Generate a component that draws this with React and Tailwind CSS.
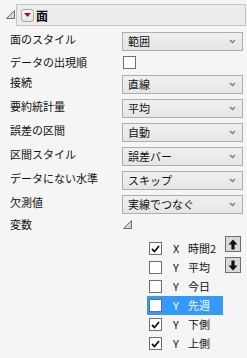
import React from "react";

const FONT = "font-['Noto_Sans_CJK_JP','Noto_Sans',sans-serif]";

function Chevron() {
  return (
    <svg width="7" height="5" viewBox="0 0 7 5" className="shrink-0">
      <path d="M1 1 L3.5 3.5 L6 1" fill="none" stroke="#7a7a7a" strokeWidth="1.3" />
    </svg>
  );
}

function Dropdown({ value }) {
  return (
    <div className="flex h-[19px] w-[121px] items-center justify-between border border-[#adadad] bg-gradient-to-b from-[#f0f0f0] to-[#e5e5e5] pl-[5px] pr-[6px]">
      <span className="text-[11px] leading-[15px] text-[#111]">{value}</span>
      <Chevron />
    </div>
  );
}

function Check({ checked }) {
  return (
    <div className="flex h-[13px] w-[13px] shrink-0 items-center justify-center border border-[#6e6e6e] bg-white">
      {checked && (
        <svg width="9" height="8" viewBox="0 0 9 8">
          <path d="M1 4 L3.5 6.5 L8 1" fill="none" stroke="#111" strokeWidth="1.8" />
        </svg>
      )}
    </div>
  );
}

function Corner() {
  return (
    <svg width="9" height="9" viewBox="0 0 9 9" className="shrink-0">
      <path d="M0.5 8.5 L8.5 0.5 L8.5 8.5 Z" fill="#d6d6d6" stroke="#6f6f6f" strokeWidth="1" />
    </svg>
  );
}

const ROWS = [
  { label: "接続", value: "直線" },
  { label: "要約統計量", value: "平均" },
  { label: "誤差の区間", value: "自動" },
  { label: "区間スタイル", value: "誤差バー" },
  { label: "データにない水準", value: "スキップ" },
  { label: "欠測値", value: "実線でつなぐ" },
];

const VARS = [
  { role: "X", name: "時間2", checked: true },
  { role: "Y", name: "平均", checked: false },
  { role: "Y", name: "今日", checked: false },
  { role: "Y", name: "先週", checked: false, selected: true },
  { role: "Y", name: "下側", checked: true },
  { role: "Y", name: "上側", checked: true },
];

function Row({ label, children }) {
  return (
    <div className="flex h-[24px] items-start">
      <span className="w-[112px] text-[11px] leading-[15px] text-[#111]">{label}</span>
      {children}
    </div>
  );
}

function MoveButton({ up }) {
  return (
    <div className="flex h-[16px] w-[16px] items-center justify-center border border-[#6e6e6e] bg-[#dadada]">
      <svg width="10" height="11" viewBox="0 0 10 11">
        {up ? (
          <path d="M5 0.5 L9.5 5.5 L6.6 5.5 L6.6 10.5 L3.4 10.5 L3.4 5.5 L0.5 5.5 Z" fill="#111" />
        ) : (
          <path d="M5 10.5 L9.5 5.5 L6.6 5.5 L6.6 0.5 L3.4 0.5 L3.4 5.5 L0.5 5.5 Z" fill="#111" />
        )}
      </svg>
    </div>
  );
}

export default function App() {
  return (
    <div className={`h-[358px] w-[247px] overflow-hidden bg-[#f5f5f5] ${FONT}`}>
      {/* header */}
      <div className="flex items-start pl-[6px] pt-[4px]">
        <div className="mt-[6px]">
          <Corner />
        </div>
        <div className="ml-[1px] flex h-[22px] w-[230px] items-center border border-[#c4c4c4] bg-[#ececec] pl-[4px]">
          <div className="flex h-[13px] w-[13px] items-center justify-center rounded-[3px] border border-[#a8a8a8] bg-gradient-to-b from-[#fbfbfb] to-[#e6e6e6]">
            <svg width="7" height="4" viewBox="0 0 7 4">
              <path d="M0 0 L7 0 L3.5 4 Z" fill="#d0021b" />
            </svg>
          </div>
          <span className="ml-[2px] text-[12px] font-bold leading-[15px] text-black">面</span>
        </div>
      </div>

      {/* options */}
      <div className="mt-[6px] flex flex-col pl-[10px]">
        <Row label="面のスタイル">
          <Dropdown value="範囲" />
        </Row>
        <div className="flex h-[19px] items-start">
          <span className="w-[113px] text-[11px] leading-[12px] text-[#111]">データの出現順</span>
          <Check checked={false} />
        </div>
        {ROWS.map((r) => (
          <Row key={r.label} label={r.label}>
            <Dropdown value={r.value} />
          </Row>
        ))}
        <div className="-mt-[1px] flex h-[18px] items-start">
          <span className="w-[113px] text-[11px] leading-[12px] text-[#111]">変数</span>
          <div className="mt-[2px]">
            <Corner />
          </div>
        </div>
      </div>

      {/* variable list */}
      <div className="flex items-start pl-[147px]">
        <div className="mt-[3px] flex w-[76px] flex-col">
          {VARS.map((v) => (
            <div
              key={v.name}
              className={`flex h-[19px] items-center pl-[2px] text-[11px] leading-[15px] ${
                v.selected ? "bg-[#3399ff] text-white" : "text-[#111]"
              }`}
            >
              <Check checked={v.checked} />
              <span className="ml-[11px] w-[15px]">{v.role}</span>
              <span>{v.name}</span>
            </div>
          ))}
        </div>
        <div className="ml-[2px] flex flex-col gap-[5px]">
          <MoveButton up />
          <MoveButton />
        </div>
      </div>
    </div>
  );
}
